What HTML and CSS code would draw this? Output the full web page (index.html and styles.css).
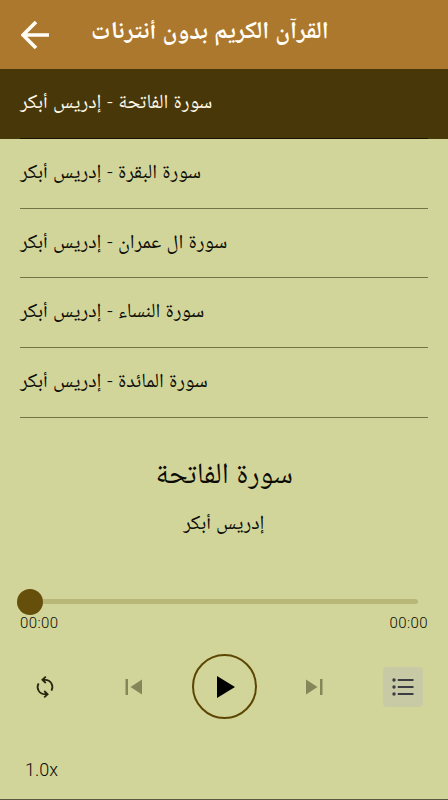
FILE: index.html
```html
<!DOCTYPE html>
<html lang="ar">
<head>
    <meta charset="UTF-8">
    <meta name="viewport" content="width=device-width, initial-scale=1">
    <title>القرآن الكريم بدون أنترنات</title>
    <link rel="stylesheet" href="styles.css">
</head>
<body>
    <header class="toolbar">
        <svg class="back" viewBox="0 0 28 28"><path d="M28 14H2M15 1L2 14l13 13" fill="none" stroke="currentColor" stroke-width="3.6"/></svg>
        <h1 dir="rtl">القرآن الكريم بدون أنترنات</h1>
    </header>

    <ul class="playlist">
        <li class="active"><span dir="rtl">سورة الفاتحة <i>-</i> إدريس أبكر</span></li>
        <li><span dir="rtl">سورة البقرة <i>-</i> إدريس أبكر</span></li>
        <li><span dir="rtl">سورة ال عمران <i>-</i> إدريس أبكر</span></li>
        <li><span dir="rtl">سورة النساء <i>-</i> إدريس أبكر</span></li>
        <li><span dir="rtl">سورة المائدة <i>-</i> إدريس أبكر</span></li>
    </ul>

    <main class="player">
        <h2 dir="rtl">سورة الفاتحة</h2>
        <p class="artist" dir="rtl">إدريس أبكر</p>

        <div class="seek">
            <div class="thumb"></div>
            <div class="track"></div>
        </div>
        <div class="times">
            <span>00:00</span>
            <span>00:00</span>
        </div>

        <div class="controls">
            <button class="btn" aria-label="repeat">
                <svg width="24" height="24" viewBox="0 0 24 24" fill="none" stroke="#26260f" stroke-width="1.8"><path d="M9 4.8h3.2a7.2 7.2 0 0 1 6.2 10.8M12.8 1.6L9.4 4.8l3.4 3.2M15 19.2h-3.2A7.2 7.2 0 0 1 5.6 8.4M11.2 22.4l3.4-3.2-3.4-3.2"/></svg>
            </button>
            <div class="transport">
                <button class="btn skip" aria-label="previous">
                    <svg width="18" height="16" viewBox="0 0 18 16"><path fill="currentColor" d="M.5 0H3v16H.5zM17 .5v15L5.5 8z"/></svg>
                </button>
                <button class="btn play" aria-label="play">
                    <svg width="18" height="22" viewBox="0 0 18 22"><path d="M0 0v22l18-11z"/></svg>
                </button>
                <button class="btn skip" aria-label="next">
                    <svg width="18" height="16" viewBox="0 0 18 16"><path fill="currentColor" d="M15 0h2.5v16H15zM1 .5v15L12.5 8z"/></svg>
                </button>
            </div>
            <button class="btn list" aria-label="playlist">
                <svg width="22" height="18" viewBox="0 0 22 18"><g fill="#3b3d42"><circle cx="2" cy="2" r="1.7"/><circle cx="2" cy="9" r="1.7"/><circle cx="2" cy="16" r="1.7"/><path d="M5.8 1h15.7v2H5.8zM5.8 8h15.7v2H5.8zM5.8 15h15.7v2H5.8z"/></g></svg>
            </button>
        </div>
        <div class="speed">1.0x</div>
    </main>
</body>
</html>
```
FILE: styles.css
```css
* {
    box-sizing: border-box;
}

body {
    margin: 0;
    height: 800px;
    display: flex;
    flex-direction: column;
    overflow: hidden;
    font-family: Roboto, "Noto Naskh Arabic UI", "Noto Naskh Arabic", "Noto Sans Arabic", "DejaVu Sans", sans-serif;
    background-color: #d2d59a;
    color: #0c0c06;
}

h1, h2, p, ul {
    margin: 0;
    padding: 0;
    font-weight: normal;
}

svg {
    display: block;
}

.toolbar {
    height: 69px;
    display: flex;
    align-items: center;
    padding-left: 21px;
    background-color: #ac782d;
    color: #fffdf5;
}

.back {
    width: 28px;
    height: 28px;
    margin-right: 42px;
}

.toolbar h1 {
    font-size: 24.4px;
    font-weight: bold;
    line-height: 30px;
    padding-bottom: 2px;
    white-space: nowrap;
}

.playlist {
    list-style: none;
}

.playlist li {
    height: 69.8px;
    padding: 0 20px;
    font-size: 20.2px;
    word-spacing: 0.2px;
    display: flex;
    flex-direction: column;
    align-items: flex-start;
}

.playlist li span {
    line-height: 71px;
    height: 68.8px;
    white-space: nowrap;
}

.playlist i {
    font-style: normal;
    font-weight: 300;
    line-height: 1;
    vertical-align: 2px;
}

.playlist li::after {
    content: "";
    width: 100%;
    height: 1px;
    background-color: #737548;
}

.playlist .active {
    background-color: #483708;
    color: #fffbe8;
}

.playlist .active::after {
    background-color: #1b1204;
}

.player {
    flex: 1;
    display: flex;
    flex-direction: column;
    border-bottom: 1px solid #5b5941;
}

.player h2 {
    margin-top: 39px;
    font-size: 29.5px;
    line-height: 40px;
    text-align: center;
}

.artist {
    margin-top: 14px;
    font-size: 20.2px;
    line-height: 28px;
    text-align: center;
}

.seek {
    display: flex;
    align-items: center;
    height: 26px;
    margin: 50px 30px 0 17px;
}

.thumb {
    width: 26px;
    height: 26px;
    border-radius: 50%;
    background-color: #664e0b;
}

.track {
    flex: 1;
    height: 5px;
    border-radius: 0 3px 3px 0;
    background-color: #b9b777;
}

.times {
    display: flex;
    justify-content: space-between;
    padding: 0 20px;
    font-size: 15px;
    line-height: 17px;
    font-weight: 300;
    letter-spacing: 0.4px;
}

.controls {
    display: flex;
    align-items: center;
    justify-content: space-between;
    height: 66px;
    margin-top: 22px;
    padding: 0 25px;
}

.transport {
    display: flex;
    align-items: center;
    gap: 37.5px;
}

.btn {
    width: 40px;
    height: 40px;
    padding: 0;
    border: none;
    background: none;
    display: flex;
    align-items: center;
    justify-content: center;
}

.skip {
    color: #85875b;
}

.play {
    width: 65px;
    height: 65px;
    border: 2px solid #5c4603;
    border-radius: 50%;
    padding-left: 4px;
}

.list {
    border-radius: 4px;
    background-color: #c8caa5;
}

.speed {
    margin: 39px 0 0 25px;
    font-size: 18px;
    line-height: 22px;
    font-weight: 300;
}
```
